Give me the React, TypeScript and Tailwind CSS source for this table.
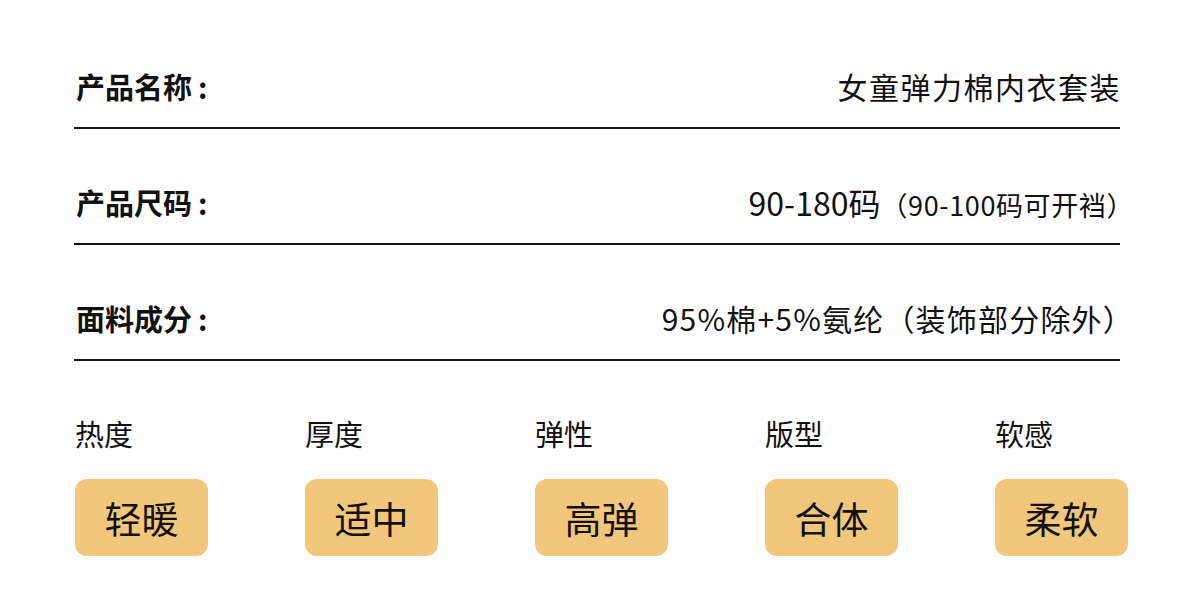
import React from "react";

const rows = [
  { label: "产品名称", value: <span className="text-[30px] tracking-[1.5px] mr-[-1px]">女童弹力棉内衣套装</span> },
  {
    label: "产品尺码",
    value: (
      <span className="flex items-baseline mr-[-14px]">
        <span className="text-[32px]">90-180码</span>
        <span className="text-[27px] tracking-[0.6px]">（90-100码可开裆）</span>
      </span>
    ),
  },
  { label: "面料成分", value: <span className="text-[30px] tracking-[1.2px] mr-[-14px]">95%棉+5%氨纶（装饰部分除外）</span> },
];

const attrs = [
  ["热度", "轻暖"],
  ["厚度", "适中"],
  ["弹性", "高弹"],
  ["版型", "合体"],
  ["软感", "柔软"],
];

export default function App() {
  return (
    <div
      className="w-[1200px] h-[614px] bg-white text-[#111] overflow-hidden"
      style={{ fontFamily: '"Noto Sans CJK SC", "Noto Sans", sans-serif' }}
    >
      <div className="pt-[47px] pl-[74px] pr-[80px] flex flex-col gap-[34px]">
        {rows.map((r) => (
          <div key={r.label} className="h-[82px] flex items-center justify-between border-b-2 border-[#111] pb-[2px] whitespace-nowrap">
            <span className="text-[29px] font-bold pl-[2px] leading-none">
              {r.label}
              <span className="ml-[6px]">:</span>
            </span>
            <span className="leading-none">{r.value}</span>
          </div>
        ))}
      </div>
      <div className="pl-[75px] pt-[58px] flex gap-[97px]">
        {attrs.map(([k, v]) => (
          <div key={k} className="w-[133px] flex flex-col">
            <span className="text-[29px] leading-none">{k}</span>
            <div className="mt-[31px] h-[77px] rounded-[12px] bg-[#f3c77b] flex items-center justify-center text-[37px] leading-none pt-[2px]">
              {v}
            </div>
          </div>
        ))}
      </div>
    </div>
  );
}
